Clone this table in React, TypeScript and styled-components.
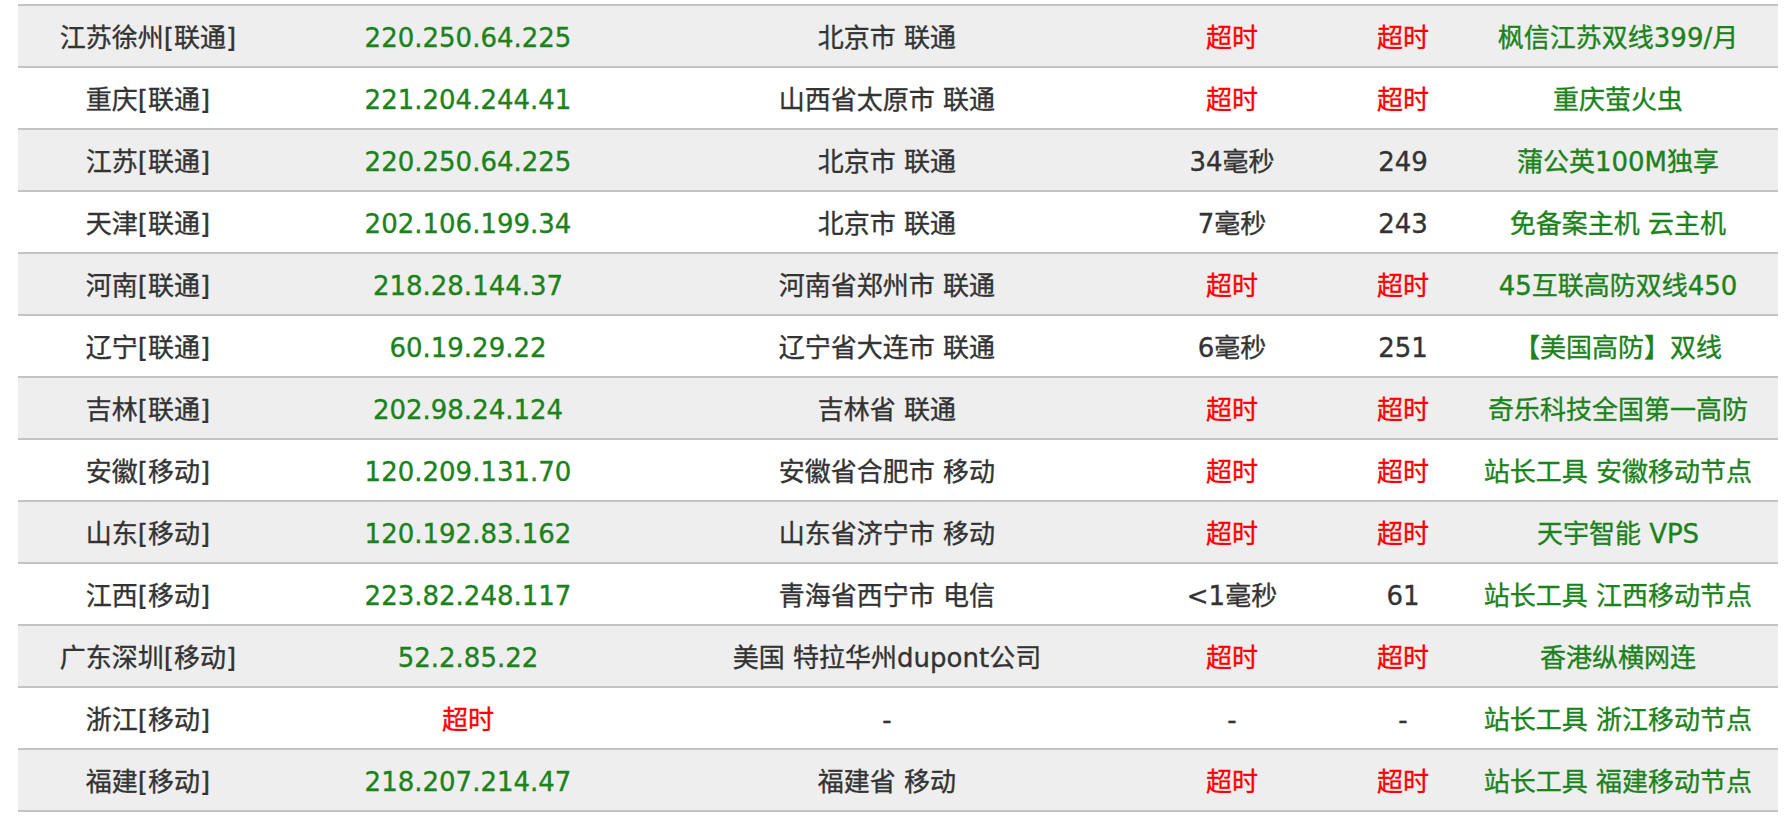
import React from "react";
import styled, { createGlobalStyle } from "styled-components";

const Global = createGlobalStyle`
  html, body { margin: 0; padding: 0; background: #ffffff; }
  body { font-family: "DejaVu Sans", "Noto Sans CJK SC", sans-serif; }
`;

const Page = styled.div`
  padding: 4px 6px 0 18px;
`;

const Table = styled.div`
  width: 1760px;
  border-top: 2px solid #c4c4c4;
`;

const Row = styled.div<{ $alt: boolean }>`
  display: grid;
  grid-template-columns: 260px 380px 458px 232px 110px 320px;
  height: 60px;
  align-items: center;
  background: ${(p) => (p.$alt ? "#eeeeee" : "#ffffff")};
  border-bottom: 2px solid #c4c4c4;
`;

type Tone = "dark" | "green" | "red";

const Cell = styled.div<{ $tone: Tone }>`
  text-align: center;
  white-space: nowrap;
  padding-top: 3px;
  font-family: "DejaVu Sans", "Noto Sans CJK SC", sans-serif;
  font-size: 26px;
  line-height: 30px;
  -webkit-text-stroke: 0.35px currentColor;
  color: ${(p) =>
    p.$tone === "green" ? "#1c821c" : p.$tone === "red" ? "#ff0000" : "#333333"};
`;

type RowData = [string, string, string, string, string, string];

const rows: RowData[] = [
  ["江苏徐州[联通]", "220.250.64.225", "北京市 联通", "超时", "超时", "枫信江苏双线399/月"],
  ["重庆[联通]", "221.204.244.41", "山西省太原市 联通", "超时", "超时", "重庆萤火虫"],
  ["江苏[联通]", "220.250.64.225", "北京市 联通", "34毫秒", "249", "蒲公英100M独享"],
  ["天津[联通]", "202.106.199.34", "北京市 联通", "7毫秒", "243", "免备案主机 云主机"],
  ["河南[联通]", "218.28.144.37", "河南省郑州市 联通", "超时", "超时", "45互联高防双线450"],
  ["辽宁[联通]", "60.19.29.22", "辽宁省大连市 联通", "6毫秒", "251", "【美国高防】双线"],
  ["吉林[联通]", "202.98.24.124", "吉林省 联通", "超时", "超时", "奇乐科技全国第一高防"],
  ["安徽[移动]", "120.209.131.70", "安徽省合肥市 移动", "超时", "超时", "站长工具 安徽移动节点"],
  ["山东[移动]", "120.192.83.162", "山东省济宁市 移动", "超时", "超时", "天宇智能 VPS"],
  ["江西[移动]", "223.82.248.117", "青海省西宁市 电信", "<1毫秒", "61", "站长工具 江西移动节点"],
  ["广东深圳[移动]", "52.2.85.22", "美国 特拉华州dupont公司", "超时", "超时", "香港纵横网连"],
  ["浙江[移动]", "超时", "-", "-", "-", "站长工具 浙江移动节点"],
  ["福建[移动]", "218.207.214.47", "福建省 移动", "超时", "超时", "站长工具 福建移动节点"],
];

const toneFor = (col: number, value: string): Tone => {
  if (value === "超时") return "red";
  if (col === 1 || col === 5) return "green";
  return "dark";
};

export default function App() {
  return (
    <>
      <Global />
      <Page>
        <Table>
          {rows.map((r, i) => (
            <Row key={i} $alt={i % 2 === 0}>
              {r.map((v, c) => (
                <Cell key={c} $tone={toneFor(c, v)}>
                  {v}
                </Cell>
              ))}
            </Row>
          ))}
        </Table>
      </Page>
    </>
  );
}
